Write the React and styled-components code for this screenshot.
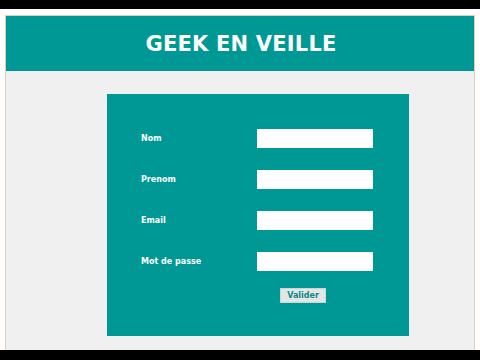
import React from 'react';
import styled, { createGlobalStyle } from 'styled-components';

const GlobalStyle = createGlobalStyle`
  html, body {
    margin: 0;
    padding: 0;
    background: #000;
  }
  body {
    font-family: "DejaVu Sans", Verdana, sans-serif;
  }
`;

const Screen = styled.div`
  width: 480px;
  height: 360px;
  display: flex;
  flex-direction: column;
  padding-top: 9px;
  padding-bottom: 10px;
  box-sizing: border-box;
  background: #000;
`;

const Frame = styled.div`
  flex: 1;
  background: #fff;
  padding: 6px 5px 0 5px;
  display: flex;
  flex-direction: column;
`;

const Page = styled.div`
  flex: 1;
  background: #f0f0f0;
  border: 1px solid #e6cbb6;
  border-bottom: none;
  display: flex;
  flex-direction: column;
`;

const Header = styled.header`
  height: 55px;
  background: #009894;
  display: flex;
  align-items: center;
  justify-content: center;
`;

const Title = styled.h1`
  margin: 0;
  color: #fff;
  font-size: 21px;
  font-weight: bold;
  letter-spacing: 0.2px;
  padding-left: 2px;
`;

const Panel = styled.form`
  margin: 23px 0 0 101px;
  width: 302px;
  height: 242px;
  box-sizing: border-box;
  background: #009894;
  padding: 35px 0 0 34px;
`;

const Grid = styled.div`
  display: grid;
  grid-template-columns: 116px 116px;
  row-gap: 22px;
  align-items: center;
`;

const Label = styled.label`
  color: #fff;
  font-size: 8px;
  font-weight: bold;
`;

const Field = styled.input`
  width: 116px;
  height: 19px;
  box-sizing: border-box;
  border: none;
  background: #fff;
  margin: 0;
`;

const Submit = styled.button`
  grid-column: 2;
  justify-self: start;
  margin: -5px 0 0 23px;
  width: 46px;
  height: 15px;
  padding: 0;
  border: 1px solid #c8d8d8;
  background: #e4e6e6;
  color: #0a8a86;
  font-family: "DejaVu Sans", Verdana, sans-serif;
  font-size: 8px;
  font-weight: bold;
`;

const fields = [
  { id: 'nom', label: 'Nom', type: 'text' },
  { id: 'prenom', label: 'Prenom', type: 'text' },
  { id: 'email', label: 'Email', type: 'text' },
  { id: 'mdp', label: 'Mot de passe', type: 'password' },
];

export default function App() {
  return (
    <>
      <GlobalStyle />
      <Screen>
        <Frame>
          <Page>
            <Header>
              <Title>GEEK EN VEILLE</Title>
            </Header>
            <Panel onSubmit={(e) => e.preventDefault()}>
              <Grid>
                {fields.map((f) => (
                  <React.Fragment key={f.id}>
                    <Label htmlFor={f.id}>{f.label}</Label>
                    <Field id={f.id} type={f.type} />
                  </React.Fragment>
                ))}
                <Submit type="submit">Valider</Submit>
              </Grid>
            </Panel>
          </Page>
        </Frame>
      </Screen>
    </>
  );
}
